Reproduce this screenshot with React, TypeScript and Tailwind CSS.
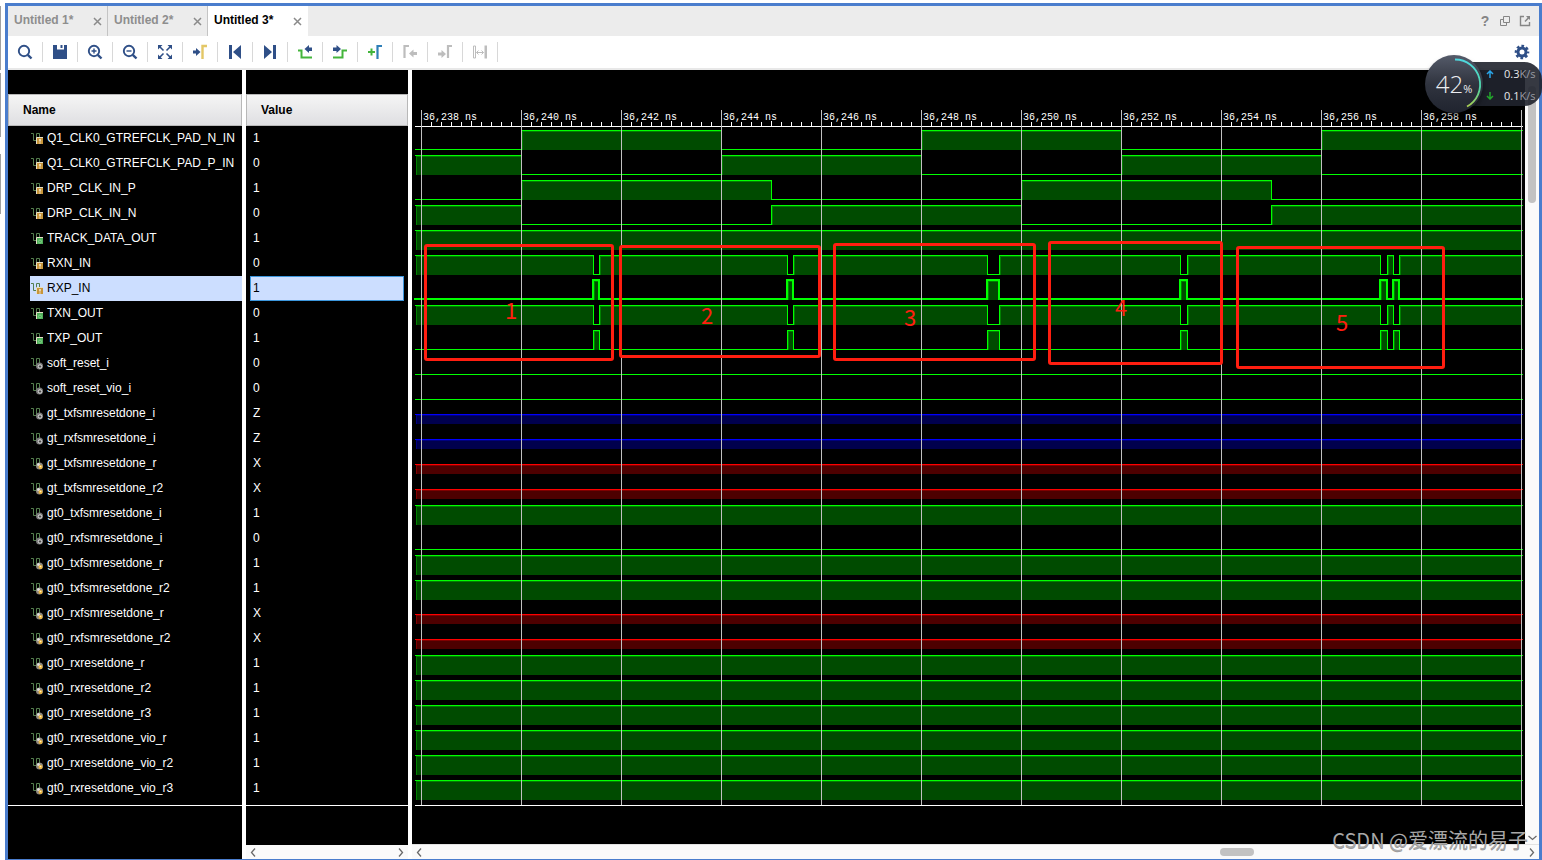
import type { ReactNode } from "react";
import { clsx } from "clsx";

/* ================================
   DATA
================================ */

type Badge = "port" | "out" | "net" | "reg";
type Level = "0" | "1" | "Z" | "X";

interface Signal {
  name: string;
  value: Level;
  badge: Badge;
  start: Level; // level at the left edge of the view
  edges?: number[]; // x of every toggle
}

const CLK = [109, 309, 509, 709, 909];
const DRP = [109, 359, 609, 859];
const DATA = [181, 187, 375, 381, 575, 587, 768, 775, 968, 975, 981, 987];

const SIGNALS: Signal[] = [
  { name: "Q1_CLK0_GTREFCLK_PAD_N_IN", value: "1", badge: "port", start: "0", edges: CLK },
  { name: "Q1_CLK0_GTREFCLK_PAD_P_IN", value: "0", badge: "port", start: "1", edges: CLK },
  { name: "DRP_CLK_IN_P", value: "1", badge: "port", start: "0", edges: DRP },
  { name: "DRP_CLK_IN_N", value: "0", badge: "port", start: "1", edges: DRP },
  { name: "TRACK_DATA_OUT", value: "1", badge: "out", start: "1" },
  { name: "RXN_IN", value: "0", badge: "port", start: "1", edges: DATA },
  { name: "RXP_IN", value: "1", badge: "port", start: "0", edges: DATA },
  { name: "TXN_OUT", value: "0", badge: "out", start: "1", edges: DATA },
  { name: "TXP_OUT", value: "1", badge: "out", start: "0", edges: DATA },
  { name: "soft_reset_i", value: "0", badge: "net", start: "0" },
  { name: "soft_reset_vio_i", value: "0", badge: "net", start: "0" },
  { name: "gt_txfsmresetdone_i", value: "Z", badge: "net", start: "Z" },
  { name: "gt_rxfsmresetdone_i", value: "Z", badge: "net", start: "Z" },
  { name: "gt_txfsmresetdone_r", value: "X", badge: "reg", start: "X" },
  { name: "gt_txfsmresetdone_r2", value: "X", badge: "reg", start: "X" },
  { name: "gt0_txfsmresetdone_i", value: "1", badge: "net", start: "1" },
  { name: "gt0_rxfsmresetdone_i", value: "0", badge: "net", start: "0" },
  { name: "gt0_txfsmresetdone_r", value: "1", badge: "reg", start: "1" },
  { name: "gt0_txfsmresetdone_r2", value: "1", badge: "reg", start: "1" },
  { name: "gt0_rxfsmresetdone_r", value: "X", badge: "reg", start: "X" },
  { name: "gt0_rxfsmresetdone_r2", value: "X", badge: "reg", start: "X" },
  { name: "gt0_rxresetdone_r", value: "1", badge: "reg", start: "1" },
  { name: "gt0_rxresetdone_r2", value: "1", badge: "reg", start: "1" },
  { name: "gt0_rxresetdone_r3", value: "1", badge: "reg", start: "1" },
  { name: "gt0_rxresetdone_vio_r", value: "1", badge: "reg", start: "1" },
  { name: "gt0_rxresetdone_vio_r2", value: "1", badge: "reg", start: "1" },
  { name: "gt0_rxresetdone_vio_r3", value: "1", badge: "reg", start: "1" },
];

const SELECTED = 6;

const MARKS = [
  { n: "1", x: 12, y: 174, w: 190, h: 117, tx: 93, ty: 249 },
  { n: "2", x: 207, y: 175, w: 202, h: 113, tx: 289, ty: 254 },
  { n: "3", x: 421, y: 173, w: 203, h: 118, tx: 492, ty: 256 },
  { n: "4", x: 636, y: 171, w: 175, h: 124, tx: 703, ty: 246 },
  { n: "5", x: 824, y: 176, w: 209, h: 123, tx: 924, ty: 261 },
];

/* ================================
   WAVEFORM
================================ */

const LEFT = 3;
const RIGHT = 1110;
const RULER_Y = 56;
const ROW = 25;
const BOTTOM = 735;

// Ruler: one major step is 2 ns
const MAJOR_X = 9;
const MAJOR_GAP = 100;
const MAJORS = Array.from({ length: 11 }, (_, k) => ({
  x: MAJOR_X + k * MAJOR_GAP,
  label: `36,${238 + k * 2} ns`,
}));
const MINORS = [1, 2, 3, 4, 5, 6, 7, 8, 9];

const Trace = ({ signal, index }: { signal: Signal; index: number }) => {
  const top = RULER_Y + index * ROW;

  if (signal.start === "Z" || signal.start === "X") {
    const z = signal.start === "Z";
    return (
      <g>
        <rect x={LEFT + 1} y={top + 14} width={RIGHT - LEFT - 2} height={9} fill={z ? "#00004d" : "#4d0000"} />
        <rect x={LEFT + 1} y={top + 14} width={1} height={9} fill={z ? "#000080" : "#800000"} />
        <rect x={LEFT + 1} y={top + 14} width={RIGHT - LEFT - 2} height={1} fill={z ? "#000080" : "#800000"} />
        <rect x={LEFT} y={top + 13} width={RIGHT - LEFT + 1} height={1} fill={z ? "#0000ff" : "#ff0000"} />
      </g>
    );
  }

  const hi = top + 4;
  const lo = top + 23;
  const bold = index === SELECTED;
  const t = bold ? 2 : 1;
  const edges = signal.edges ?? [];
  const points = [LEFT, ...edges, RIGHT];

  return (
    <g>
      {points.slice(0, -1).map((a, i) => {
        const b = points[i + 1];
        const high = (signal.start === "1") === (i % 2 === 0);
        if (!high) {
          return (
            <rect
              key={a}
              x={bold ? a - 1 : a}
              y={bold ? lo - 1 : lo}
              width={b - a + t}
              height={t}
              fill="#00ff00"
            />
          );
        }
        const end = b === RIGHT ? RIGHT - 1 : b;
        return (
          <g key={a}>
            <rect x={a + 1} y={hi + 1} width={end - a - 1} height={19} fill="#004b00" />
            <rect x={a + 1} y={hi + 1} width={1} height={19} fill="#008000" />
            <rect x={a + 1} y={hi + 1} width={end - a - 1} height={1} fill="#008000" />
            <rect x={bold ? a - 1 : a} y={bold ? hi - 1 : hi} width={b - a + t} height={t} fill="#00ff00" />
          </g>
        );
      })}
      {edges.map((x) => (
        <rect key={x} x={bold ? x - 1 : x} y={bold ? hi - 1 : hi} width={t} height={bold ? 21 : 20} fill="#00ff00" />
      ))}
    </g>
  );
};

const Waveform = () => (
  <svg className="block h-full w-full" role="img" aria-label="Waveforms">
    {SIGNALS.map((s, i) => (
      <Trace key={s.name} signal={s} index={i} />
    ))}

    {/* Ruler and grid */}
    <rect x={LEFT} y={RULER_Y} width={RIGHT - LEFT + 1} height={1} fill="#fff" />
    <rect x={LEFT} y={BOTTOM} width={RIGHT - LEFT + 1} height={1} fill="#fff" />
    {MAJORS.map((m) => (
      <g key={m.x}>
        <rect x={m.x} y={40} width={1} height={BOTTOM - 40} fill="#c0c0c0" />
        <text x={m.x + 2} y={50} fill="#fff" className="font-['Liberation_Mono',monospace] text-[10px]">
          {m.label}
        </text>
        {MINORS.map((n) => (
          <rect key={n} x={m.x + n * 10} y={n === 5 ? 51 : 52} width={1} height={n === 5 ? 5 : 4} fill="#fff" />
        ))}
      </g>
    ))}
    <rect x={RIGHT - 1} y={40} width={1} height={BOTTOM - 40} fill="#c0c0c0" />

    {/* Marked regions */}
    {MARKS.map((m) => (
      <g key={m.n}>
        <rect
          x={m.x + 1.5}
          y={m.y + 1.5}
          width={m.w - 3}
          height={m.h - 3}
          rx={1.5}
          fill="none"
          stroke="#ff1e10"
          strokeWidth={3}
        />
        <text x={m.tx} y={m.ty} fill="#ff1e10" className="font-['Noto_Sans_CJK_SC',sans-serif] text-[22px]">
          {m.n}
        </text>
      </g>
    ))}
  </svg>
);

/* ================================
   ICONS
================================ */

const NAVY = "#2f4f87";
const GREEN = "#44b53c";
const GREY = "#bdbdbd";

const Icon = ({ children }: { children: ReactNode }) => (
  <svg viewBox="0 0 16 16" className="size-4" fill="none" aria-hidden="true">
    {children}
  </svg>
);

const Lens = ({ children }: { children?: ReactNode }) => (
  <Icon>
    <circle cx="7" cy="7" r="5.2" stroke={NAVY} strokeWidth="1.9" />
    <path d="M10.8 10.8l3.7 3.7" stroke={NAVY} strokeWidth="2.4" />
    {children}
  </Icon>
);

const TOOLS: { label: string; icon: ReactNode; disabled?: boolean }[] = [
  { label: "Find", icon: <Lens /> },
  {
    label: "Save",
    icon: (
      <Icon>
        <path d="M1 1h4v4.5h7V1h3v14H1z" fill={NAVY} />
        <path d="M8.5 1h2v3h-2z" fill={NAVY} />
      </Icon>
    ),
  },
  { label: "Zoom in", icon: <Lens><path d="M4.5 7h5M7 4.5v5" stroke={NAVY} strokeWidth="1.4" /></Lens> },
  { label: "Zoom out", icon: <Lens><path d="M4.5 7h5" stroke={NAVY} strokeWidth="1.4" /></Lens> },
  {
    label: "Zoom fit",
    icon: (
      <Icon>
        <path d="M1 1h4.5L1 5.5zM15 1v4.5L10.5 1zM1 15v-4.5L5.5 15zM15 15h-4.5l4.5-4.5z" fill={NAVY} />
        <path d="M2.5 2.5l4 4M13.5 2.5l-4 4M2.5 13.5l4-4M13.5 13.5l-4-4" stroke={NAVY} strokeWidth="1.6" />
      </Icon>
    ),
  },
  {
    label: "Go to cursor",
    icon: (
      <Icon>
        <path d="M1 6.5h3V4l4.5 4L4 12V9.5H1z" fill={NAVY} />
        <path d="M10.5 15V2H15" stroke="#e3c766" strokeWidth="2.4" />
      </Icon>
    ),
  },
  {
    label: "Go to start",
    icon: (
      <Icon>
        <path d="M2 1h3v14H2zM14 1v14L6 8z" fill={NAVY} />
      </Icon>
    ),
  },
  {
    label: "Go to end",
    icon: (
      <Icon>
        <path d="M11 1h3v14h-3zM2 1v14l8-7z" fill={NAVY} />
      </Icon>
    ),
  },
  {
    label: "Previous transition",
    icon: (
      <Icon>
        <path d="M1 6.5h3.5v7H15" stroke={GREEN} strokeWidth="2" />
        <path d="M15 3.500h-3V1L7.500 5l4.500 4V7h3z" fill={NAVY} />
      </Icon>
    ),
  },
  {
    label: "Next transition",
    icon: (
      <Icon>
        <path d="M1 13.5h9.5v-7H15" stroke={GREEN} strokeWidth="2" />
        <path d="M1 3.5h3.5V1L9 5 4.5 9V7H1z" fill={NAVY} />
      </Icon>
    ),
  },
  {
    label: "Add marker",
    icon: (
      <Icon>
        <path d="M1 8h7M4.5 4.5v7" stroke={GREEN} strokeWidth="2" />
        <path d="M10.5 15V2H15" stroke="#2f7fb8" strokeWidth="2.2" />
      </Icon>
    ),
  },
  {
    label: "Previous marker",
    disabled: true,
    icon: (
      <Icon>
        <path d="M2.5 14V2H7" stroke={GREY} strokeWidth="2.2" />
        <path d="M15 8h-3.5V5.5L7 9.5l4.5 4V11H15z" fill={GREY} />
      </Icon>
    ),
  },
  {
    label: "Next marker",
    disabled: true,
    icon: (
      <Icon>
        <path d="M11 14V2h4" stroke={GREY} strokeWidth="2.2" />
        <path d="M1 8.5h3.5V6L9 10l-4.5 4v-2.5H1z" fill={GREY} />
      </Icon>
    ),
  },
  {
    label: "Swap cursors",
    disabled: true,
    icon: (
      <Icon>
        <path d="M1.5 2h2v12h-2z" stroke={GREY} />
        <path d="M12.5 1.5H15v13h-2.5z" fill={GREY} />
        <path d="M4.5 8.5h7M6.5 6.5l-2 2 2 2M9.5 6.5l2 2-2 2" stroke={GREY} />
      </Icon>
    ),
  },
];

const BADGE_FILL: Record<Badge, string> = {
  port: "#c8963a",
  out: "#4fae58",
  net: "#7a7a7a",
  reg: "#8f8a80",
};

const SignalIcon = ({ badge }: { badge: Badge }) => (
  <svg viewBox="0 0 13 13" className="size-[13px] shrink-0" fill="none" aria-hidden="true">
    <path d="M0 1.5h2.5v7h3v-7h3v5" stroke="#557f4e" />
    {(badge === "port" || badge === "out") && (
      <>
        <rect x="6" y="6" width="6" height="6" fill={BADGE_FILL[badge]} />
        <path d="M5.5 12V5.5H12" stroke="#e6dfc8" />
      </>
    )}
    {badge === "port" && <path d="M9 7v2.5M9 10.5v1" stroke="#fff" strokeWidth="1.2" />}
    {badge === "out" && <circle cx="9" cy="9.5" r="1.5" stroke="#7fcf88" />}
    {(badge === "net" || badge === "reg") && <circle cx="8.5" cy="9" r="3.5" fill={BADGE_FILL[badge]} />}
    {badge === "net" && (
      <>
        <circle cx="9" cy="9.5" r="1.8" stroke="#cfcfcf" />
        <circle cx="9" cy="9.5" r="0.8" fill="#333" />
      </>
    )}
    {badge === "reg" && (
      <>
        <circle cx="7.5" cy="7.5" r="1.5" fill="#ddd" />
        <circle cx="9.5" cy="10" r="2" fill="#f0b63c" />
        <circle cx="9.5" cy="9.5" r="0.8" fill="#fff3c4" />
      </>
    )}
  </svg>
);

const Chevron = ({ d }: { d: string }) => (
  <svg viewBox="0 0 9 9" className="size-[9px]" fill="none" aria-hidden="true">
    <path d={d} stroke="#6a6a6a" strokeWidth="1.3" />
  </svg>
);

const CHEVRON_LEFT = "M6 0.5L2.5 4.5 6 8.5";
const CHEVRON_RIGHT = "M3 0.5L6.5 4.5 3 8.5";
const CHEVRON_DOWN = "M0.5 3L4.5 6.5 8.5 3";

/* ================================
   PARTS
================================ */

const Tab = ({ title, active }: { title: string; active?: boolean }) => (
  <div
    className={clsx(
      "flex w-[100px] items-center justify-between border-r pr-[5px] pl-1.5",
      active ? "border-white bg-white" : "border-[#c4c4c4]",
    )}
  >
    <button className={clsx("pb-0.5 text-xs font-bold", active ? "text-black" : "text-[#8e8e8e]")}>{title}</button>
    <button aria-label={`Close ${title}`}>
      <svg viewBox="0 0 9 9" className="size-[9px]" aria-hidden="true">
        <path d="M1 1l7 7M8 1L1 8" stroke="#8a8a8a" strokeWidth="1.5" />
      </svg>
    </button>
  </div>
);

const HEAD =
  "h-8 border border-[#b8b8b8] bg-linear-to-b from-[#f5f5f5] to-[#dfdfe2] pl-3.5 text-left text-xs font-bold text-black";

const NameColumn = () => (
  <div className="w-[234px] shrink-0 bg-black pt-6">
    <table className="w-full border-separate border-spacing-0">
      <thead>
        <tr>
          <th className={HEAD}>Name</th>
        </tr>
      </thead>
      <tbody>
        {SIGNALS.map((s, i) => (
          <tr key={s.name}>
            <td className="p-0 pl-[22px]">
              <div
                className={clsx(
                  "flex h-[25px] items-center gap-[3px] pl-px whitespace-nowrap",
                  i === SELECTED ? "bg-[#ccdeff] text-black" : "text-white",
                )}
              >
                <SignalIcon badge={s.badge} />
                <span className="pb-0.5">{s.name}</span>
              </div>
            </td>
          </tr>
        ))}
      </tbody>
    </table>
    <div className="mt-1 h-px bg-white" />
  </div>
);

const ValueColumn = () => (
  <div className="flex w-[162px] shrink-0 flex-col justify-between bg-black pt-6">
    <div>
      <table className="w-full border-separate border-spacing-0">
        <thead>
          <tr>
            <th className={HEAD}>Value</th>
          </tr>
        </thead>
        <tbody>
          {SIGNALS.map((s, i) => (
            <tr key={s.name}>
              <td className="p-0 px-1">
                <div
                  className={clsx(
                    "flex h-[25px] items-center border pb-0.5 pl-0.5",
                    i === SELECTED ? "border-[#3c96dc] bg-[#ccdeff] text-black" : "border-black text-white",
                  )}
                >
                  {s.value}
                </div>
              </td>
            </tr>
          ))}
        </tbody>
      </table>
      <div className="mt-1 h-px bg-white" />
    </div>
    <div className="flex h-3.5 items-center justify-between bg-[#fafafa] px-[3px]">
      <button aria-label="Scroll values left"><Chevron d={CHEVRON_LEFT} /></button>
      <button aria-label="Scroll values right"><Chevron d={CHEVRON_RIGHT} /></button>
    </div>
  </div>
);

const WavePanel = () => (
  <div className="flex min-w-0 flex-1 flex-col">
    <div className="flex min-h-0 flex-1">
      <div className="min-w-0 flex-1 overflow-hidden bg-black">
        <Waveform />
      </div>
      <div className="flex w-3.5 flex-col items-center justify-between bg-[#fafafa] pt-4 pb-0.5">
        <div className="h-[117px] w-2 rounded-full bg-[#c2c2c2]" />
        <button aria-label="Scroll down"><Chevron d={CHEVRON_DOWN} /></button>
      </div>
    </div>
    <div className="flex h-[15px] items-center border-t border-[#e2e2e2] bg-[#fafafa] px-[3px]">
      <button aria-label="Scroll waveform left"><Chevron d={CHEVRON_LEFT} /></button>
      <div className="flex flex-1 justify-end pr-[273px]">
        <div className="h-2 w-[34px] rounded-full bg-[#c2c2c2]" />
      </div>
      <button aria-label="Scroll waveform right"><Chevron d={CHEVRON_RIGHT} /></button>
    </div>
  </div>
);

const RATES = [
  { value: "0.3", color: "#2aa5e8", d: "M4 8V1.5M1 4l3-3 3 3" },
  { value: "0.1", color: "#23a82c", d: "M4 0v6.5M1 4l3 3 3-3" },
];

const SpeedBall = () => (
  <div className="absolute top-[55px] right-0 flex items-center font-['Open_Sans',sans-serif]">
    <div className="absolute right-0 h-11 w-[72px] rounded-r-[18px] bg-[#20232d]/90 pt-px pl-4">
      {RATES.map((r) => (
        <div key={r.value} className="flex h-[22px] items-center text-[11px] text-[#e8e8ea]">
          <svg viewBox="0 0 8 8" className="mr-2.5 size-2" fill="none" aria-hidden="true">
            <path d={r.d} stroke={r.color} strokeWidth="1.5" />
          </svg>
          {r.value}
          <span className="text-[#9a9ca4]">K/s</span>
        </div>
      ))}
    </div>
    <div className="relative mr-[59px] flex size-[58px] items-center justify-center rounded-full bg-linear-to-b from-[#555b6a] via-[#30343f] to-[#20242f] text-[#eceef2] shadow-md shadow-black/40">
      <svg viewBox="0 0 58 58" className="absolute inset-0" fill="none" aria-hidden="true">
        <defs>
          <linearGradient id="arc" x1="0" y1="0" x2="0" y2="1">
            <stop offset="0" stopColor="#4fd8e0" />
            <stop offset="0.6" stopColor="#4fd8a8" />
            <stop offset="1" stopColor="#a8cc50" />
          </linearGradient>
        </defs>
        <path d="M30 4.5A25 25 0 0 1 42 51.5" stroke="url(#arc)" strokeWidth="1.8" />
      </svg>
      <span className="text-2xl font-light">42</span>
      <span className="pt-2.5 text-[11px]">%</span>
    </div>
  </div>
);

/* ================================
   APP
================================ */

export default function App() {
  return (
    <div className="relative flex h-screen overflow-hidden bg-white pt-[3px] font-['Liberation_Sans',Arial,sans-serif] text-xs">
      {/* Edge of the docked panes on the left */}
      <div className="flex w-[5px] shrink-0 flex-col pt-[3px]">
        <div className="h-16 w-px bg-[#a0a0a0]" />
        <div className="mt-[3px] h-16 w-px bg-[#a0a0a0]" />
        <div className="mt-[17px] h-[60px] w-px bg-[#a0a0a0]" />
      </div>

      <div className="flex min-w-0 flex-1 flex-col border-3 border-b border-[#4a7dcd]">
        {/* Tabs */}
        <div className="flex h-[30px] shrink-0 bg-[#ececec]">
          <Tab title="Untitled 1*" />
          <Tab title="Untitled 2*" />
          <Tab title="Untitled 3*" active />
          <div className="ml-auto flex items-center gap-2 pr-2 text-[#858585]">
            <button aria-label="Help" className="w-3 text-sm font-bold">?</button>
            <button aria-label="Restore">
              <svg viewBox="0 0 12 12" className="size-3" fill="none" aria-hidden="true">
                <path d="M4.5 1.5h6v6h-6zM7.5 7.5v3h-6v-6h3" stroke="#858585" />
              </svg>
            </button>
            <button aria-label="Float">
              <svg viewBox="0 0 12 12" className="size-3" fill="none" aria-hidden="true">
                <path d="M5 1.5H1.5v9h9V7" stroke="#858585" strokeWidth="1.4" />
                <path d="M7 1h4v4L9.700 3.700 6.500 7 5.500 6l3-3.300z" fill="#858585" />
              </svg>
            </button>
          </div>
        </div>

        {/* Toolbar */}
        <div className="flex h-[34px] shrink-0 items-center border-b-2 border-[#e8e8e8] bg-white">
          {TOOLS.map((t) => (
            <button
              key={t.label}
              aria-label={t.label}
              disabled={t.disabled}
              className="flex h-5 w-[35px] items-center justify-center border-r border-[#d8d8d8]"
            >
              {t.icon}
            </button>
          ))}
          <button aria-label="Settings" className="mr-[9px] ml-auto">
            <Icon>
              <circle cx="8" cy="8" r="4" stroke={NAVY} strokeWidth="3" />
              <circle cx="8" cy="8" r="6" stroke={NAVY} strokeWidth="2.6" strokeDasharray="2.6 2.112" strokeDashoffset="1.3" />
            </Icon>
          </button>
        </div>

        {/* Wave window */}
        <div className="flex min-h-0 flex-1 gap-1 bg-white">
          <NameColumn />
          <ValueColumn />
          <WavePanel />
        </div>
      </div>

      <SpeedBall />

      <div className="pointer-events-none absolute right-3.5 bottom-1.5 font-['Noto_Sans_CJK_SC',sans-serif] text-xl text-[#a8a8a8] text-shadow-2xs text-shadow-black/40">
        CSDN @爱漂流的易子
      </div>
    </div>
  );
}
